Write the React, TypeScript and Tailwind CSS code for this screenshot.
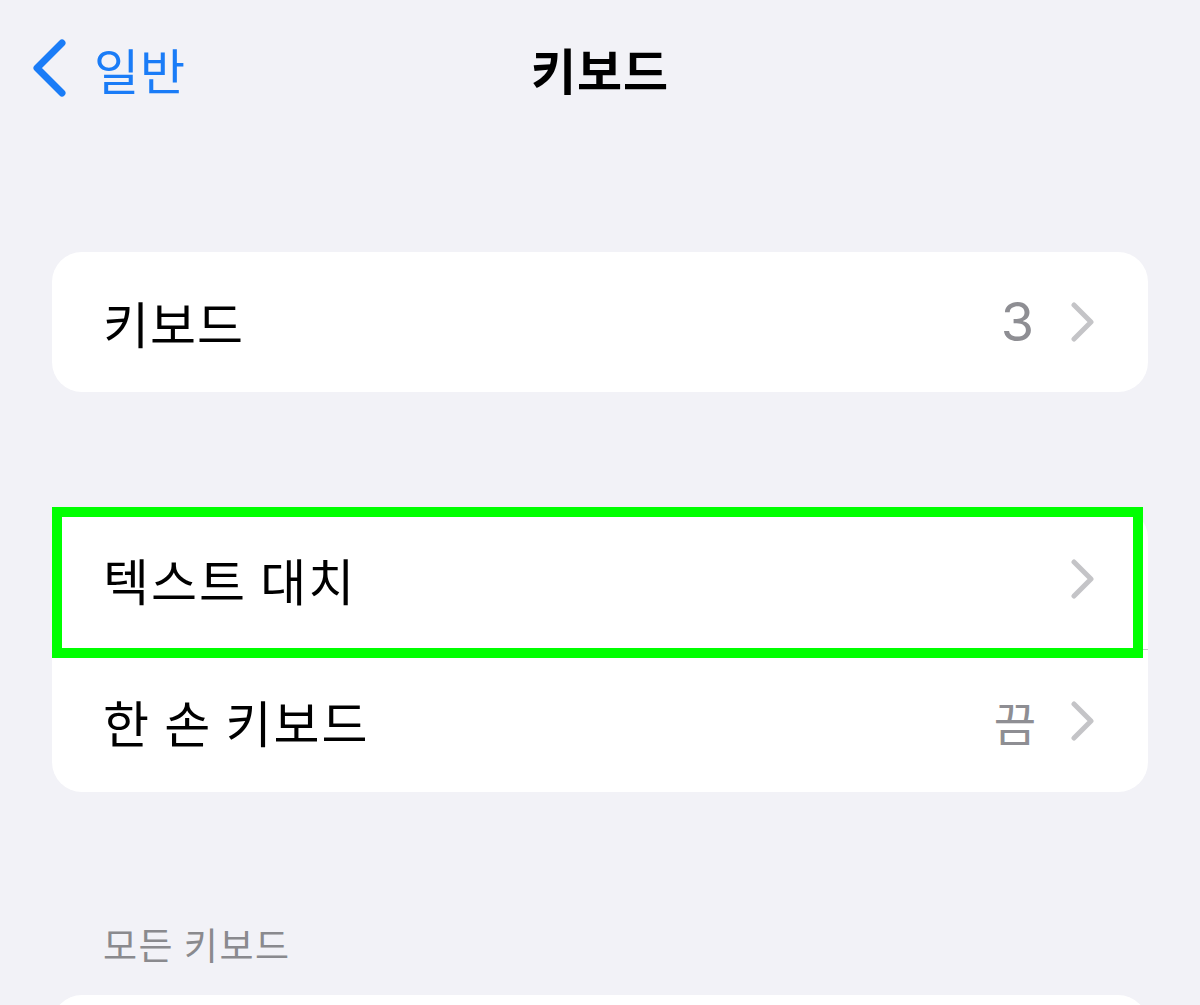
import React from "react";

const font = {
  fontFamily: '"Noto Sans CJK KR", "Noto Sans", sans-serif',
};

function ChevronRight() {
  return (
    <svg width="26" height="40" viewBox="0 0 26 40" fill="none" className="shrink-0">
      <path
        d="M4 3 L21 20 L4 37"
        stroke="#c4c4c7"
        strokeWidth="5"
        strokeLinecap="round"
        strokeLinejoin="round"
      />
    </svg>
  );
}

export default function App() {
  return (
    <div className="h-[1005px] overflow-hidden bg-[#f2f2f7]" style={font}>
      {/* Header */}
      <div className="relative h-[136px] flex items-center justify-center">
        <div className="absolute left-[30px] top-[38px] flex items-center gap-[24px]">
          <svg width="40" height="60" viewBox="0 0 40 60" fill="none">
            <path
              d="M32 5 L7 30 L32 55"
              stroke="#1a7cf7"
              strokeWidth="7"
              strokeLinecap="round"
              strokeLinejoin="round"
            />
          </svg>
          <span className="text-[49px] leading-none tracking-[1px] text-[#1a7cf7]">일반</span>
        </div>
        <h1 className="text-[49px] leading-none font-bold tracking-[1px] text-black">키보드</h1>
      </div>

      {/* Card 1 */}
      <div className="mt-[116px] mx-[52px] bg-white rounded-[30px] overflow-hidden">
        <div className="h-[140px] flex items-center pl-[51px] pr-[52px]">
          <span className="flex-1 text-[50px] leading-none tracking-[1px] text-black">키보드</span>
          <span
            className="text-[54px] leading-none text-[#8e8e93] mr-[36px]"
            style={{ fontFamily: 'Inter, "Noto Sans", sans-serif' }}
          >
            3
          </span>
          <ChevronRight />
        </div>
      </div>

      {/* Card 2 */}
      <div className="mt-[116px] mx-[52px] bg-white rounded-[30px]">
        <div className="relative h-[142px] flex items-center pl-[51px] pr-[52px]">
          <span className="flex-1 text-[50px] leading-none tracking-[2px] text-black">텍스트 대치</span>
          <ChevronRight />
          <div className="absolute left-[51px] right-0 bottom-0 h-px bg-[#c6c6c8]" />
          <div className="absolute left-0 top-[-1px] right-[5px] bottom-[-8px] border-[10px] border-[#00ff00]" />
        </div>
        <div className="h-[142px] flex items-center pl-[51px] pr-[52px]">
          <span className="flex-1 text-[50px] leading-none tracking-[2px] text-black">한 손 키보드</span>
          <span className="text-[46px] leading-none text-[#8e8e93] mr-[34px]">끔</span>
          <ChevronRight />
        </div>
      </div>

      {/* Section header */}
      <div className="mt-[130px] pl-[103px] text-[37px] leading-[44px] tracking-[1.5px] text-[#8a8a8e]">
        모든 키보드
      </div>

      {/* Card 3 */}
      <div className="mt-[29px] mx-[52px] h-[200px] bg-white rounded-t-[30px]" />
    </div>
  );
}
